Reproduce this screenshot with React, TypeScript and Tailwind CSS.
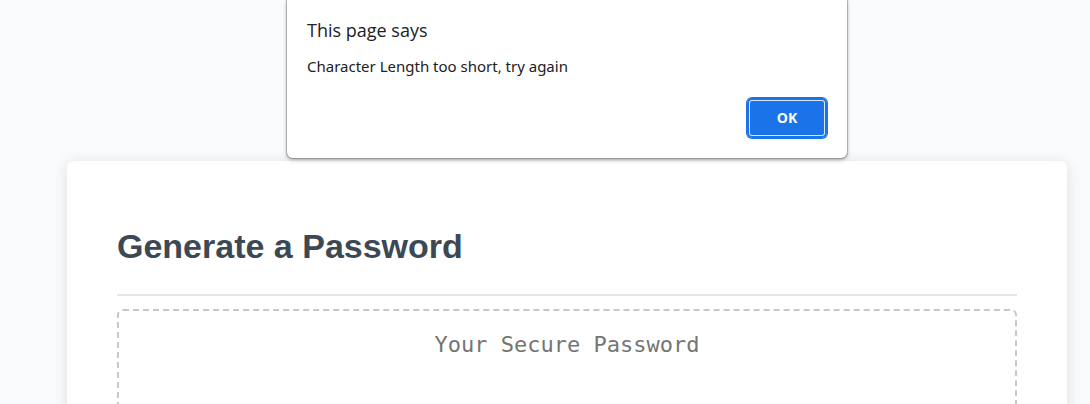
export default function App() {
  return (
    <div className="relative h-screen overflow-hidden bg-[#fafbfd] font-['Liberation_Sans',Arial,sans-serif]">
      <main className="mr-[23px] ml-[67px] pt-[161px]">
        <section className="rounded-md bg-white px-[50px] pt-[50px] pb-8 shadow-[0_2px_15px_rgba(0,0,0,0.12)]">
          <header className="border-b-2 border-[#e6e6e6] pt-[11px] pb-6">
            <h1 className="text-[34px] leading-[48px] font-bold text-[#3c4954]">Generate a Password</h1>
          </header>
          <textarea
            readOnly
            aria-label="Your Secure Password"
            placeholder="Your Secure Password"
            className="mt-[13px] block h-40 w-full resize-none rounded-md border-2 border-dashed border-[#c3c7cf] bg-white pt-5 text-center font-['DejaVu_Sans_Mono',monospace] text-[22px] leading-7 text-[#757575] outline-none placeholder:text-[#757575]"
          />
        </section>
      </main>
      <div
        role="alertdialog"
        aria-labelledby="dialog-title"
        aria-describedby="dialog-message"
        className="absolute top-0 left-[287px] w-[560px] rounded-b-md bg-white px-5 pt-[18px] pb-5 font-['Open_Sans',sans-serif] text-[#202124] shadow-[0_0_1px_1px_rgba(60,70,70,0.35),0_2px_4px_rgba(60,70,70,0.4)]"
      >
        <h2 id="dialog-title" className="text-lg leading-6">This page says</h2>
        <p id="dialog-message" className="mt-3 font-['Noto_Sans',sans-serif] text-[15px] leading-6">Character Length too short, try again</p>
        <div className="mt-5 flex justify-end">
          <button className="h-10 w-20 rounded-[5px] bg-[#1a73e8] text-sm font-bold text-white shadow-[0_0_0_1px_#1a73e8,inset_0_0_0_2px_#1a73e8,inset_0_0_0_3px_#d9e7fc] outline-none">OK</button>
        </div>
      </div>
    </div>
  );
}
